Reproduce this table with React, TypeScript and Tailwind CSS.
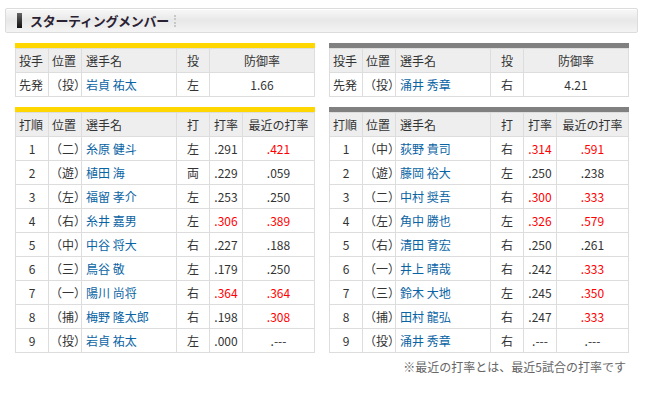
type Row = [string, string, string, string, string, string, boolean?, boolean?];

const homeLineup: Row[] = [
  ["1", "（二）", "糸原 健斗", "左", ".291", ".421", false, true],
  ["2", "（遊）", "植田 海", "両", ".229", ".059"],
  ["3", "（左）", "福留 孝介", "左", ".253", ".250"],
  ["4", "（右）", "糸井 嘉男", "左", ".306", ".389", true, true],
  ["5", "（中）", "中谷 将大", "右", ".227", ".188"],
  ["6", "（三）", "鳥谷 敬", "左", ".179", ".250"],
  ["7", "（一）", "陽川 尚将", "右", ".364", ".364", true, true],
  ["8", "（捕）", "梅野 隆太郎", "右", ".198", ".308", false, true],
  ["9", "（投）", "岩貞 祐太", "左", ".000", ".---"],
];

const awayLineup: Row[] = [
  ["1", "（中）", "荻野 貴司", "右", ".314", ".591", true, true],
  ["2", "（遊）", "藤岡 裕大", "左", ".250", ".238"],
  ["3", "（二）", "中村 奨吾", "右", ".300", ".333", true, true],
  ["4", "（左）", "角中 勝也", "左", ".326", ".579", true, true],
  ["5", "（右）", "清田 育宏", "右", ".250", ".261"],
  ["6", "（一）", "井上 晴哉", "右", ".242", ".333", false, true],
  ["7", "（三）", "鈴木 大地", "左", ".245", ".350", false, true],
  ["8", "（捕）", "田村 龍弘", "右", ".247", ".333", false, true],
  ["9", "（投）", "涌井 秀章", "右", ".---", ".---"],
];

const th = "h-[24px] p-0 border border-[#dddddd] bg-[#eeeeee] font-normal";
const td = "h-[24px] p-0 border border-[#dddddd] bg-white";

function PitcherTable({ bar, name, hand, era }: { bar: string; name: string; hand: string; era: string }) {
  return (
    <div className={`border-t-[5px] ${bar}`}>
      <table className="w-[300px] table-fixed border-collapse text-[12px] text-[#333]">
        <colgroup>
          <col className="w-[33px]" />
          <col className="w-[33px]" />
          <col className="w-[95px]" />
          <col className="w-[33px]" />
          <col />
        </colgroup>
        <thead>
          <tr>
            <th className={`${th} text-left pl-[3px]`}>投手</th>
            <th className={`${th} text-left pl-[3px]`}>位置</th>
            <th className={`${th} text-left pl-[4px]`}>選手名</th>
            <th className={`${th} text-center`}>投</th>
            <th className={`${th} text-center`}>防御率</th>
          </tr>
        </thead>
        <tbody>
          <tr>
            <td className={`${td} pl-[3px]`}>先発</td>
            <td className={`${td} pl-[1px]`}>（投）</td>
            <td className={`${td} pl-[4px] text-[#0a64a4]`}>{name}</td>
            <td className={`${td} text-center`}>{hand}</td>
            <td className={`${td} text-center`}>{era}</td>
          </tr>
        </tbody>
      </table>
    </div>
  );
}

function LineupTable({ bar, rows }: { bar: string; rows: Row[] }) {
  return (
    <div className={`mt-[10px] border-t-[5px] ${bar}`}>
      <table className="w-[300px] table-fixed border-collapse text-[12px] text-[#333]">
        <colgroup>
          <col className="w-[33px]" />
          <col className="w-[33px]" />
          <col className="w-[95px]" />
          <col className="w-[33px]" />
          <col className="w-[33px]" />
          <col />
        </colgroup>
        <thead>
          <tr>
            <th className={`${th} text-left pl-[3px]`}>打順</th>
            <th className={`${th} text-left pl-[3px]`}>位置</th>
            <th className={`${th} text-left pl-[4px]`}>選手名</th>
            <th className={`${th} text-center`}>打</th>
            <th className={`${th} text-center`}>打率</th>
            <th className={`${th} text-center`}>最近の打率</th>
          </tr>
        </thead>
        <tbody>
          {rows.map(([no, pos, name, hand, avg, recent, avgRed, recentRed]) => (
            <tr key={no}>
              <td className={`${td} text-center`}>{no}</td>
              <td className={`${td} pl-[1px]`}>{pos}</td>
              <td className={`${td} pl-[4px] text-[#0a64a4]`}>{name}</td>
              <td className={`${td} text-center`}>{hand}</td>
              <td className={`${td} text-center ${avgRed ? "text-[#ff0000]" : ""}`}>{avg}</td>
              <td className={`${td} text-center ${recentRed ? "text-[#ff0000]" : ""}`}>{recent}</td>
            </tr>
          ))}
        </tbody>
      </table>
    </div>
  );
}

export default function App() {
  return (
    <div className="w-[645px] h-[395px] bg-white pt-[8px] font-['Noto_Sans_CJK_JP',sans-serif]">
      <div className="mx-[5px] h-[25px] w-[633px] rounded-[2px] border border-[#dcdcdc] bg-gradient-to-b from-[#f8f8f8] via-[#e8e8e8] to-[#f4f4f4] shadow-[inset_0_1px_0_#ffffff] flex items-center pl-[11px]">
        <div className="w-[5px] h-[15px] bg-gradient-to-b from-[#666666] to-[#111111]" />
        <h2 className="ml-[8px] text-[13px] font-bold text-[#2a2233] leading-none tracking-[-0.3px]">
          スターティングメンバー
        </h2>
        <div className="ml-[5px] h-[12px] border-l-2 border-dotted border-[#c8c8c8]" />
      </div>

      <div className="mt-[10px] pl-[15px] flex gap-[14px]">
        <div>
          <PitcherTable bar="border-[#ffd700]" name="岩貞 祐太" hand="左" era="1.66" />
          <LineupTable bar="border-[#ffd700]" rows={homeLineup} />
        </div>
        <div>
          <PitcherTable bar="border-[#808080]" name="涌井 秀章" hand="右" era="4.21" />
          <LineupTable bar="border-[#808080]" rows={awayLineup} />
        </div>
      </div>

      <p className="mt-[5px] w-[626px] text-right text-[12px] text-[#666]">※最近の打率とは、最近5試合の打率です</p>
    </div>
  );
}
